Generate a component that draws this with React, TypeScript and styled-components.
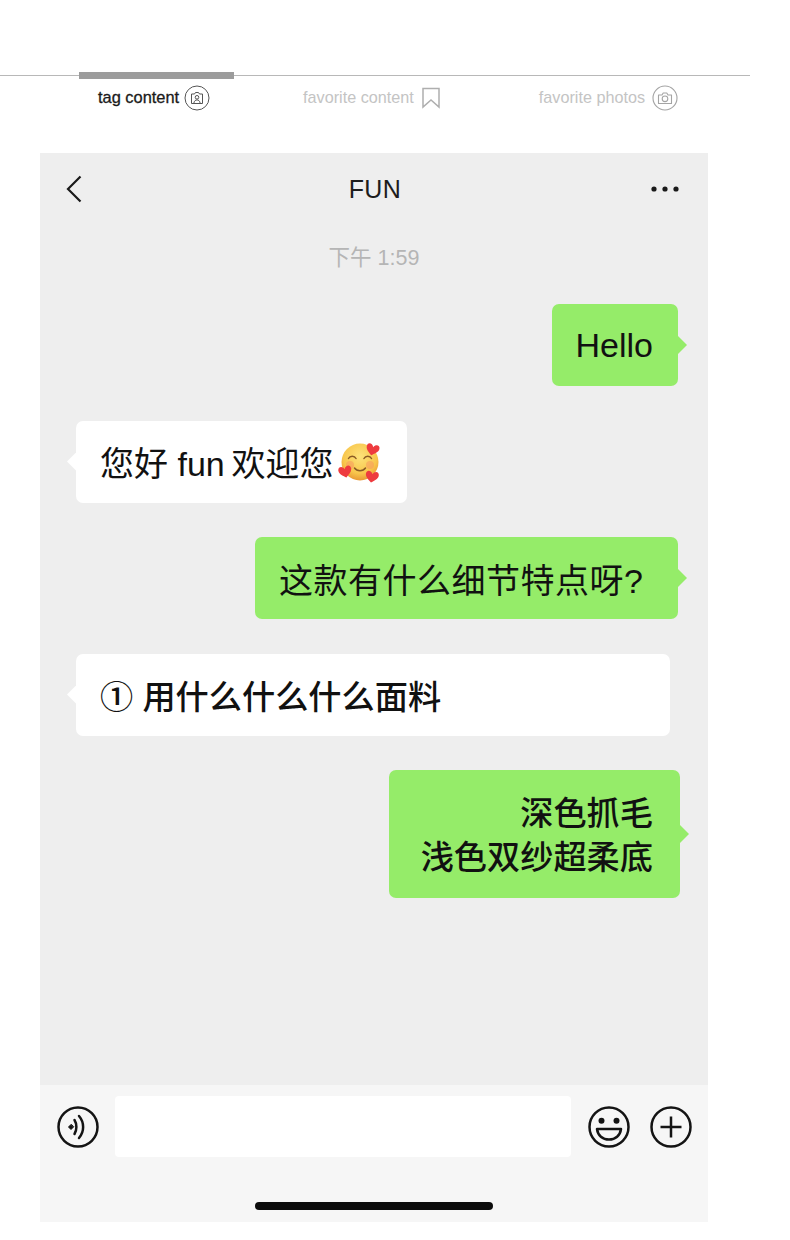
import styled, { createGlobalStyle } from 'styled-components';

const GlobalStyle = createGlobalStyle`
  html, body {
    margin: 0;
    padding: 0;
    background: #fff;
    font-family: 'Liberation Sans', 'Noto Sans CJK SC', sans-serif;
  }
`;

const Page = styled.div`
  width: 790px;
  height: 1240px;
  display: flex;
  flex-direction: column;
  overflow: hidden;
`;

const TabBar = styled.div`
  position: relative;
  width: 750px;
  height: 76px;
  box-sizing: border-box;
  border-bottom: 1px solid #b8b8b8;
  flex-shrink: 0;
`;

const ActiveBar = styled.div`
  position: absolute;
  left: 79px;
  bottom: -4px;
  width: 155px;
  height: 7px;
  background: #9c9c9c;
`;

const Tabs = styled.div`
  display: flex;
  align-items: center;
  height: 43px;
  padding-left: 98px;
  flex-shrink: 0;
`;

const Tab = styled.div<{ $active?: boolean; $gap: number }>`
  display: flex;
  align-items: center;
  margin-right: ${(p) => p.$gap}px;
  gap: ${(p) => (p.$active ? 5 : 7)}px;
  font-size: ${(p) => (p.$active ? 16.4 : 16.2)}px;
  color: ${(p) => (p.$active ? '#1a1a1a' : '#c4c4c4')};
  -webkit-text-stroke: ${(p) => (p.$active ? '0.3px #1a1a1a' : '0')};
  white-space: nowrap;
`;

const Phone = styled.div`
  width: 668px;
  height: 1069px;
  margin: 34px 0 0 40px;
  background: #eeeeee;
  display: flex;
  flex-direction: column;
  flex-shrink: 0;
`;

const NavBar = styled.div`
  height: 72px;
  padding: 0 29px 0 26px;
  display: grid;
  grid-template-columns: 1fr auto 1fr;
  align-items: center;
  flex-shrink: 0;
`;

const NavEnd = styled.div`
  display: flex;
  justify-content: flex-end;
`;

const NavStart = styled.div`
  display: flex;
`;

const Title = styled.div`
  font-size: 25px;
  color: #1c1c1c;
  letter-spacing: 0.4px;
  padding-left: 5px;
`;

const Time = styled.div`
  margin-top: 19px;
  height: 28px;
  line-height: 28px;
  text-align: center;
  font-size: 21.500px;
  color: #b5b5b5;
`;

const Messages = styled.div`
  flex: 1;
  display: flex;
  flex-direction: column;
  gap: 34.500px;
  padding: 32px 30px 0 36px;
`;

const Bubble = styled.div<{ $mine?: boolean; $medium?: boolean; $width?: number; $tracking?: number }>`
  position: relative;
  align-self: ${(p) => (p.$mine ? 'flex-end' : 'flex-start')};
  width: ${(p) => (p.$width ? `${p.$width}px` : 'auto')};
  box-sizing: border-box;
  height: 82px;
  padding: 0 25px 0 24px;
  display: flex;
  align-items: center;
  gap: 4px;
  border-radius: 7px;
  background: ${(p) => (p.$mine ? '#95ec69' : '#ffffff')};
  color: #111;
  font-size: ${(p) => (p.$medium ? 33.2 : 34)}px;
  font-weight: ${(p) => (p.$medium ? 500 : 400)};
  letter-spacing: ${(p) => p.$tracking ?? 0}px;
  white-space: nowrap;

  &::after {
    content: '';
    position: absolute;
    top: 50%;
    ${(p) => (p.$mine ? 'right: -9px;' : 'left: -9px;')}
    width: 18px;
    height: 18px;
    margin-top: -9px;
    clip-path: ${(p) =>
      p.$mine
        ? 'polygon(50% 0, 100% 50%, 50% 100%)'
        : 'polygon(50% 0, 0 50%, 50% 100%)'};
    background: ${(p) => (p.$mine ? '#95ec69' : '#ffffff')};
  }
`;

const MultiLineBubble = styled(Bubble)`
  height: 128px;
  margin-right: -2px;
  padding-top: 4px;
  padding-right: 27px;
  justify-content: flex-end;
  text-align: right;
  line-height: 44px;
  white-space: pre-line;
`;

const InputBar = styled.div`
  height: 137px;
  background: #f6f6f6;
  padding: 11px 16px 0 17px;
  box-sizing: border-box;
  display: flex;
  flex-direction: column;
  flex-shrink: 0;
`;

const InputRow = styled.div`
  display: flex;
  align-items: center;
  height: 61px;
`;

const TextInput = styled.div`
  width: 456px;
  height: 61px;
  margin: 0 17px 0 16px;
  background: #fff;
  border-radius: 4px;
`;

const IconGap = styled.div`
  width: 20px;
`;

const HomeIndicator = styled.div`
  width: 238px;
  height: 8px;
  margin: 45px 0 0 198px;
  border-radius: 4px;
  background: #0c0c0c;
`;

const TagIcon = () => (
  <svg width="26" height="26" viewBox="0 0 26 26" fill="none" stroke="#555" strokeWidth="1">
    <circle cx="13" cy="13" r="12" />
    <path d="M7.500 9h3l1-1.500h3l1 1.500h3v9.500h-11z" />
    <circle cx="13" cy="12.300" r="1.800" />
    <path d="M9.800 18.300c.4-2.400 1.700-3.400 3.200-3.400s2.800 1 3.200 3.400" />
  </svg>
);

const BookmarkIcon = () => (
  <svg width="20" height="22" viewBox="0 0 20 22" fill="none" stroke="#aeaeae" strokeWidth="1.500">
    <path d="M2 1.500h16v18.500l-8-7-8 7z" />
  </svg>
);

const CameraIcon = () => (
  <svg width="26" height="26" viewBox="0 0 26 26" fill="none" stroke="#a4a4a4" strokeWidth="1.100">
    <circle cx="13" cy="13" r="12" />
    <path d="M6.500 10h3.500l1.200-2h3.600l1.200 2h3.500v8.500h-13z" strokeLinejoin="round" />
    <circle cx="13" cy="13.800" r="2.800" />
  </svg>
);

const BackIcon = () => (
  <svg width="16" height="28" viewBox="0 0 16 28" fill="none" stroke="#1a1a1a" strokeWidth="2.200">
    <path d="M14.500 1.500 2 14 14.500 26.500" />
  </svg>
);

const MoreIcon = () => (
  <svg width="28" height="6" viewBox="0 0 28 6" fill="#1a1a1a">
    <circle cx="3" cy="3" r="2.600" />
    <circle cx="14" cy="3" r="2.600" />
    <circle cx="25" cy="3" r="2.600" />
  </svg>
);

const VoiceIcon = () => (
  <svg width="42" height="42" viewBox="0 0 42 42" fill="none" stroke="#141414" strokeWidth="2.500" strokeLinecap="round">
    <circle cx="21" cy="21" r="19.500" />
    <path d="M14 18.500 11.500 21 14 23.500 16.500 21z" fill="#141414" strokeWidth="1" strokeLinejoin="round" />
    <path d="M17.500 14c2.500 4 2.500 10 0 14" />
    <path d="M22 10c5.500 6.500 5.500 15.500 0 22" />
  </svg>
);

const SmileIcon = () => (
  <svg width="42" height="42" viewBox="0 0 42 42" fill="none" stroke="#141414" strokeWidth="2.500">
    <circle cx="21" cy="21" r="19.500" />
    <circle cx="13.500" cy="14.800" r="3" fill="#141414" stroke="none" />
    <circle cx="28.500" cy="14.800" r="3" fill="#141414" stroke="none" />
    <path d="M9 23h24c-.8 6.500-5.600 10.500-12 10.500S9.800 29.500 9 23z" strokeLinejoin="round" />
  </svg>
);

const PlusIcon = () => (
  <svg width="42" height="42" viewBox="0 0 42 42" fill="none" stroke="#141414" strokeWidth="2.500">
    <circle cx="21" cy="21" r="19.500" />
    <path d="M21 10.500v21M10.500 21h21" />
  </svg>
);

const HeartPath = 'M0 2.500C-1.200-.5-5-.5-5 2.800-5 5.500-2 7.300 0 9 2 7.300 5 5.500 5 2.800 5-.5 1.200-.5 0 2.500z';

const EmojiIcon = () => (
  <svg width="44" height="44" viewBox="0 0 44 44">
    <defs>
      <radialGradient id="face" cx="50%" cy="35%" r="65%">
        <stop offset="0%" stopColor="#fde27a" />
        <stop offset="70%" stopColor="#f8c64c" />
        <stop offset="100%" stopColor="#e99a35" />
      </radialGradient>
    </defs>
    <circle cx="22" cy="22" r="18.500" fill="url(#face)" />
    <circle cx="12" cy="25" r="4" fill="#f7945f" opacity="0.5" />
    <circle cx="32" cy="25" r="4" fill="#f7945f" opacity="0.5" />
    <path d="M10.500 18.500c1.500-3 6-3 7.500 0M26 18.500c1.500-3 6-3 7.500 0" fill="none" stroke="#8a5a24" strokeWidth="1.500" strokeLinecap="round" />
    <path d="M16.500 28c2.500 3.500 8.500 3.500 11 0" fill="none" stroke="#8a5a24" strokeWidth="1.500" strokeLinecap="round" />
    <g fill="#ee3b3f">
      <path d={HeartPath} transform="translate(36 4) rotate(14) scale(1.300)" />
      <path d={HeartPath} transform="translate(6 26) rotate(-12) scale(1.300)" />
      <path d={HeartPath} transform="translate(35 31) rotate(10) scale(1.300)" />
    </g>
  </svg>
);

const App = () => (
  <Page>
    <GlobalStyle />
    <TabBar>
      <ActiveBar />
    </TabBar>
    <Tabs>
      <Tab $active $gap={93}>
        tag content
        <TagIcon />
      </Tab>
      <Tab $gap={98}>
        favorite content
        <BookmarkIcon />
      </Tab>
      <Tab $gap={0}>
        favorite photos
        <CameraIcon />
      </Tab>
    </Tabs>
    <Phone>
      <NavBar>
        <NavStart>
          <BackIcon />
        </NavStart>
        <Title>FUN</Title>
        <NavEnd>
          <MoreIcon />
        </NavEnd>
      </NavBar>
      <Time>下午 1:59</Time>
      <Messages>
        <Bubble $mine>Hello</Bubble>
        <Bubble>
          {'您好 fun\u2009欢迎您'}
          <EmojiIcon />
        </Bubble>
        <Bubble $mine $width={423} $tracking={0.5}>这款有什么细节特点呀?</Bubble>
        <Bubble $medium $width={594}>① 用什么什么什么面料</Bubble>
        <MultiLineBubble $mine $medium $width={291}>{'深色抓毛\n浅色双纱超柔底'}</MultiLineBubble>
      </Messages>
      <InputBar>
        <InputRow>
          <VoiceIcon />
          <TextInput />
          <SmileIcon />
          <IconGap />
          <PlusIcon />
        </InputRow>
        <HomeIndicator />
      </InputBar>
    </Phone>
  </Page>
);

export default App;
